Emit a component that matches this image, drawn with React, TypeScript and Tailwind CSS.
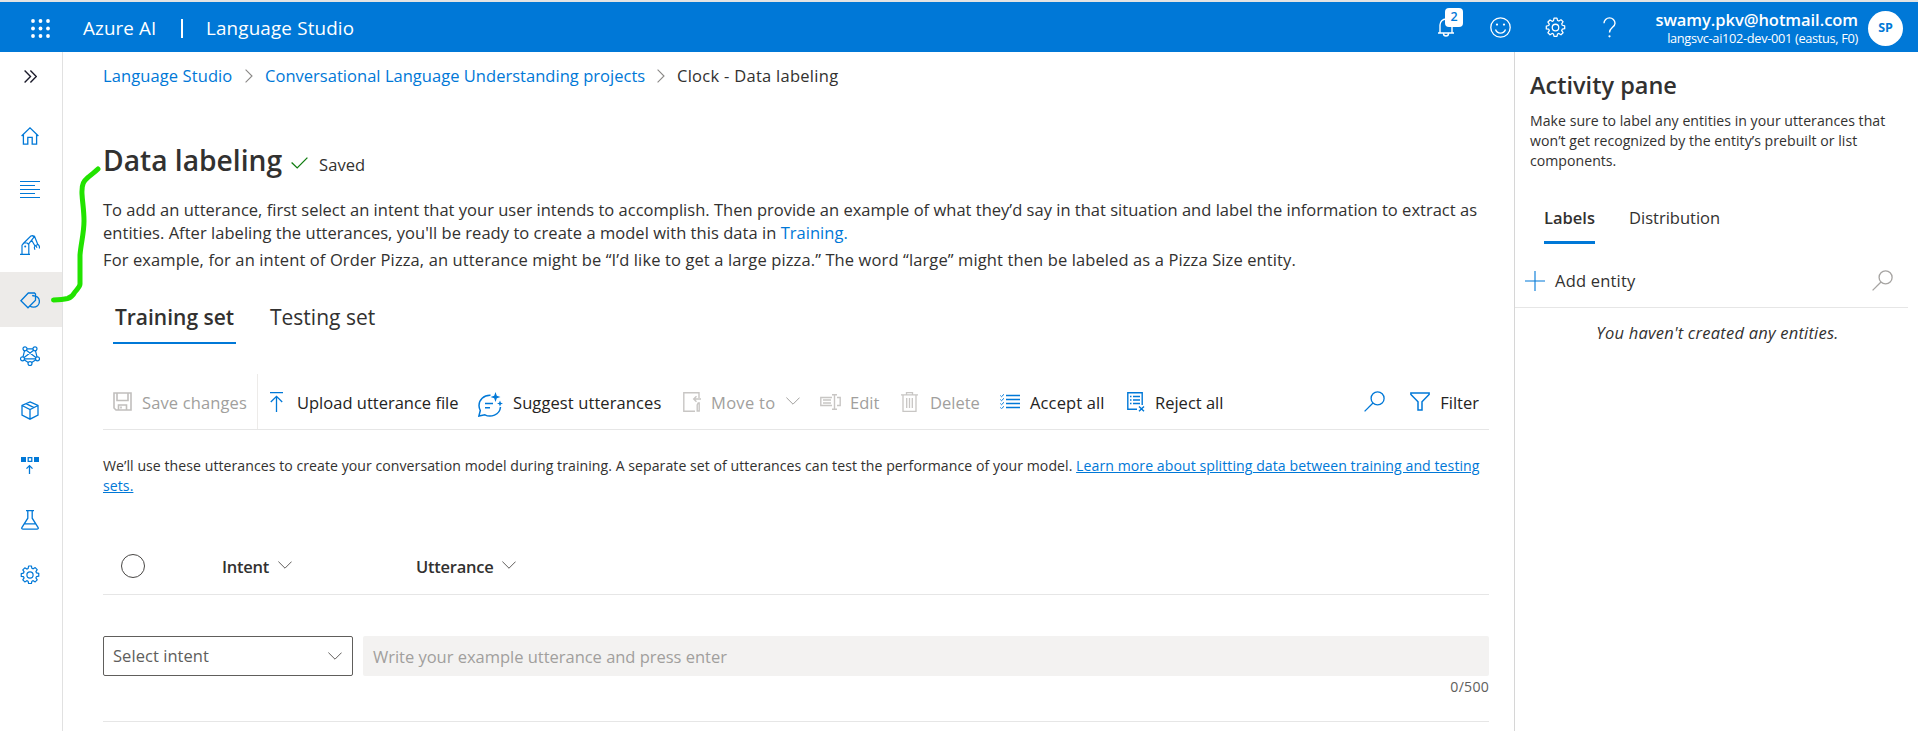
import React from 'react';

type IconProps = { className?: string; children?: React.ReactNode; box?: string; sw?: number };

function Icon({ className = '', children, box = '0 0 20 20', sw = 1.2 }: IconProps) {
  return (
    <svg viewBox={box} fill="none" stroke="currentColor" strokeWidth={sw} className={`shrink-0 ${className}`}>
      {children}
    </svg>
  );
}

const GEAR =
  'M8.6 1h2.8l.5 2.3 1.3.55 2-1.3 2 2-1.3 2 .55 1.3 2.3.5v2.8l-2.3.5-.55 1.3 1.3 2-2 2-2-1.3-1.3.55-.5 2.3H8.6l-.5-2.3-1.3-.55-2 1.3-2-2 1.3-2-.55-1.3L1.25 11.4V8.6l2.3-.5.55-1.3-1.3-2 2-2 2 1.3 1.3-.55z';

function Gear({ className }: { className?: string }) {
  return (
    <Icon className={className} sw={1.2}>
      <path d={GEAR} strokeLinejoin="round" />
      <circle cx="10" cy="10" r="3.1" />
    </Icon>
  );
}

function ChevronDown({ className = '' }: { className?: string }) {
  return (
    <Icon box="0 0 14 8" className={`h-2 w-[14px] ${className}`} sw={1}>
      <path d="M.4.6 7 7.2 13.6.6" />
    </Icon>
  );
}

function ChevronRight({ className = '' }: { className?: string }) {
  return (
    <Icon box="0 0 8 14" className={`h-[14px] w-2 text-[#8a8886] ${className}`} sw={1.1}>
      <path d="M.6.6 7 7 .6 13.4" />
    </Icon>
  );
}

function Search({ className = '' }: { className?: string }) {
  return (
    <Icon box="0 0 21 21" className={`size-[21px] ${className}`} sw={1.3}>
      <circle cx="13.6" cy="7.4" r="6.5" />
      <path d="M9 12 .6 20.4" />
    </Icon>
  );
}

function NavItem({ active = false, children }: { active?: boolean; children: React.ReactNode }) {
  return (
    <a className={`flex h-[55px] items-center justify-center pr-[2px] pt-[1px] ${active ? 'bg-[#edebe9]' : ''}`}>{children}</a>
  );
}

function Header() {
  const dots = [2, 9.5, 17];
  return (
    <header className="flex h-[52px] shrink-0 items-center border-t-2 border-[#e3e3e3] bg-[#0078d7] text-white">
      <svg viewBox="0 0 19 19" className="ml-[31px] mt-[3px] size-[19px] shrink-0" fill="currentColor">
        {dots.map((x) => dots.map((y) => <circle key={`${x}-${y}`} cx={x} cy={y} r="1.9" />))}
      </svg>
      <span className="ml-[33px] mt-[2px] w-[98px] whitespace-nowrap text-[18.8px] tracking-[0.12px]">Azure AI</span>
      <span className="mt-[3px] h-[19px] w-[2px] bg-white" />
      <span className="ml-[23px] mt-[2px] whitespace-nowrap text-[18.8px] tracking-[0.18px]">Language Studio</span>

      <div className="relative ml-auto h-[50px] w-[53px]">
        <Icon box="0 0 18 20" className="mt-[15px] h-5 w-[18px]" sw={1.4}>
          <path d="M1 16h16M3 16V8a6 6 0 0 1 12 0v8M6.5 16.5a2.5 2.5 0 0 0 5 0" />
        </Icon>
        <span className="absolute left-[8px] top-[6px] flex h-[19px] w-[18px] items-center justify-center rounded-[4px] bg-white text-[12.5px] font-semibold text-[#0078d7]">
          2
        </span>
      </div>
      <Icon box="0 0 21 21" className="size-[21px]" sw={1.3}>
        <circle cx="10.5" cy="10.5" r="9.7" />
        <path d="M5.5 12.5a5.3 5.3 0 0 0 10 0" />
        <circle cx="7" cy="7.6" r="1.1" fill="currentColor" stroke="none" />
        <circle cx="14" cy="7.6" r="1.1" fill="currentColor" stroke="none" />
      </Icon>
      <Gear className="ml-[34px] size-[21px]" />
      <Icon box="0 0 13 21" className="ml-[37px] h-[21px] w-[13px]" sw={1.4}>
        <path d="M1 6.2a5.5 5.3 0 0 1 11 0c0 4-5.5 4.300-5.500 9.300" />
        <circle cx="6.500" cy="19.300" r="1.100" fill="currentColor" stroke="none" />
      </Icon>
      <div className="ml-[39px] mt-[3px] flex w-[203px] flex-col items-end whitespace-nowrap">
        <span className="text-[16.500px] font-semibold leading-[20px] tracking-[-0.05px]">swamy.pkv@hotmail.com</span>
        <span className="text-[12.800px] leading-[17px] tracking-[-0.330px]">langsvc-ai102-dev-001 (eastus, F0)</span>
      </div>
      <span className="ml-[10px] mr-[15px] mt-[2px] flex size-[35px] items-center justify-center rounded-full bg-white text-[12.500px] font-bold text-[#0078d7]">
        SP
      </span>
    </header>
  );
}

function SideNav() {
  return (
    <nav className="w-[63px] shrink-0 border-r border-[#e1e1e1] text-[#0078d7]">
      <div className="flex h-[55px] items-start justify-center pr-[1px] pt-[18px]">
        <Icon box="0 0 13 13" className="size-[13px] text-[#1b1b2b]" sw={1.4}>
          <path d="m.6.6 5.900 5.900-5.900 5.900M6.400.6l5.900 5.900-5.900 5.900" />
        </Icon>
      </div>
      <NavItem>
        <Icon box="0 0 18 18" className="mt-[1px] size-[18px]" sw={1.300}>
          <path d="M.6 9 9 .9 17.400 9M2.400 7.500v9.700h4.400v-6.800h4.400v6.800h4.400V7.500" />
        </Icon>
      </NavItem>
      <NavItem>
        <Icon className="size-5" sw={1}>
          <path d="M0 1.500h20M0 5.500h15M0 9.500h20M0 13.500h15M0 17.500h20" />
        </Icon>
      </NavItem>
      <NavItem>
        <Icon className="size-5" sw={1.200}>
          <path d="M0 19.300h10M2 19V10.200l2-2.200h3.200l1.600 1.500V19M2.800 9 10.800 1l1.700-.4 1.500 1.500-5.500 7M13 .8l1.500.4 3.300 8.300M11.500 5l3.500 6M18 9.500l-2 .8c-1.800.8-2 2.800-1 4.400M18 9.500c1.300.8 1.700 2.200 1.400 4M15.800 10.500l1.200 2.200" />
          <circle cx="5.200" cy="11.500" r="1" fill="currentColor" stroke="none" />
        </Icon>
      </NavItem>
      <NavItem active>
        <Icon box="0 0 20 17" className="mt-[1px] h-[17px] w-5" sw={1.300}>
          <path d="M.9 8.800 8.300 1h6.200l1 1v6.300L8 15.800z" />
          <path d="M12.500 3.600c5 .2 6.900 3 6.900 5.900 0 3.500-2.900 5.700-6 5.700-1.500 0-2.600-.5-3.600-1.300" />
          <circle cx="13" cy="3.600" r=".8" fill="currentColor" stroke="none" />
        </Icon>
      </NavItem>
      <NavItem>
        <Icon className="mt-[1px] size-5" sw={1.200}>
          <circle cx="5" cy="2.800" r="2" />
          <circle cx="15" cy="2.800" r="2" />
          <circle cx="2.500" cy="12.800" r="2" />
          <circle cx="17.500" cy="12.800" r="2" />
          <circle cx="10" cy="17.600" r="2" />
          <path d="M7 2.800h6M4.500 4.800 3 10.800M15.500 4.800l1.500 6M4.500 12.800h11M4.400 14l3.900 2.500M15.600 14l-3.900 2.500M6.300 4.300l9.600 7.200M13.700 4.300 4.100 11.500" />
        </Icon>
      </NavItem>
      <NavItem>
        <Icon box="0 0 18 19" className="mr-[1px] h-[19px] w-[18px]" sw={1.300}>
          <path d="M9 .9 17 4.500v9.700l-8 4-8-4V4.500zM1 4.500l8 4 8-4M9 8.500v9.700M5 2.700l8 4" />
        </Icon>
      </NavItem>
      <NavItem>
        <Icon box="0 0 18 17" className="h-[17px] w-[18px]" sw={1.300}>
          <path d="M0 0h5v5H0zM13 0h5v5h-5z" fill="currentColor" stroke="none" />
          <path d="M7.200.7h3.600v3.600H7.200zM8.500 17V8.800M5.500 11.600l3-3 3 3" />
        </Icon>
      </NavItem>
      <NavItem>
        <Icon box="0 0 18 20" className="h-5 w-[18px]" sw={1.300}>
          <path d="M5 .7h8M6.800.7v7.500L1 17.300c-.6 1.200 0 1.900 1 1.900h14c1 0 1.600-.7 1-1.900L11.200 8.200V.7M3.500 13.800h11" />
        </Icon>
      </NavItem>
      <NavItem>
        <Gear className="size-5" />
      </NavItem>
    </nav>
  );
}

function Toolbar() {
  return (
    <div className="mt-[30px] flex h-[56px] items-center whitespace-nowrap border-b border-[#e6e6e6] text-[16.500px] text-[#242322]">
      <div className="flex h-full w-[155px] shrink-0 items-center border-r border-[#edebe9] pl-[10px] text-[#a19f9d]">
        <Icon box="0 0 19 19" className="size-[19px] text-[#c1bfbd]" sw={1.600}>
          <path d="M1 1h17v17H3l-2-2zM4 1v7.500h11V1M5.500 18v-5h8v5M8 14.500v2" />
        </Icon>
        <span className="ml-[10px] mt-[3px] tracking-[0.130px]">Save changes</span>
      </div>
      <div className="flex w-[220px] shrink-0 items-center pl-[12px]">
        <Icon box="0 0 13 20" className="h-5 w-[13px] text-[#0078d7]" sw={1.300}>
          <path d="M0 .7h13M6.500 20V4.500M.8 10l5.700-5.700 5.700 5.700" />
        </Icon>
        <span className="ml-[14px] mt-[3px]">Upload utterance file</span>
      </div>
      <div className="flex w-[205px] shrink-0 items-center">
        <Icon box="0 0 25 25" className="mt-[5px] size-[25px] text-[#0078d7]" sw={1.500}>
          <path d="M12.500 3.200C5.500 3 1 8 1 13.500c0 2 .5 3.500 1.300 5L.9 24l6-1.200c5.500 3 14.800.500 15.600-7.800M7 11.500h8M7 15.800h5" />
          <path
            d="m17.500 0 1.300 3.700 3.700 1.300-3.700 1.300L17.500 10l-1.300-3.700L12.500 5l3.700-1.300zM22 8.500l.9 2.200 2.100.8-2.100.8L22 14.500l-.9-2.200-2.100-.8 2.100-.8z"
            fill="currentColor"
            stroke="none"
          />
        </Icon>
        <span className="ml-[10px] mt-[3px] tracking-[0.100px]">Suggest utterances</span>
      </div>
      <div className="flex w-[137px] shrink-0 items-center text-[#a19f9d]">
        <Icon box="0 0 18 20" className="h-5 w-[18px] text-[#c8c6c4]" sw={1.400}>
          <path d="M16 6V.8H.8v18.400H12M18 7h-7M13.500 4.200 10.700 7l2.800 2.800M14.200 19v-6l1-2h1v8z" />
        </Icon>
        <span className="ml-[10px] mt-[3px] w-[65px] tracking-[0.300px]">Move to</span>
        <ChevronDown className="ml-[10px] mt-[-1px]" />
      </div>
      <div className="flex w-[81px] shrink-0 items-center text-[#a19f9d]">
        <Icon box="0 0 21 16" className="h-4 w-[21px] text-[#c8c6c4]" sw={1.400}>
          <path d="M12 3.500H.8v8H12M3 6h8M3 9h8M17 3.500h3.200v8H17M14.500.8v14.400M12 .7h5M12 15.300h5" />
        </Icon>
        <span className="ml-[9px] mt-[3px]">Edit</span>
      </div>
      <div className="flex w-[99px] shrink-0 items-center text-[#a19f9d]">
        <Icon box="0 0 17 20" className="h-5 w-[17px] text-[#c8c6c4]" sw={1.300}>
          <path d="M0 2.800h17M5.500 2.500V.7h6v1.800M2 3v16.300h13V3M5.700 6v10M8.500 6v10M11.300 6v10" />
        </Icon>
        <span className="ml-[12px] mt-[3px]">Delete</span>
      </div>
      <div className="flex w-[127px] shrink-0 items-center">
        <Icon box="0 0 20 15" className="h-[15px] w-5 text-[#0078d7]" sw={1.400}>
          <path d="M6 1.500h14M6 5.500h14M6 9.500h14M6 13.500h14" />
          <path d="m.3 1.500 1.200 1.200L4 .3M.3 5.500l1.200 1.200L4 4.300M.3 9.500l1.200 1.200L4 8.300M.3 13.500l1.200 1.200L4 12.300" strokeWidth="1" />
        </Icon>
        <span className="ml-[10px] mt-[3px] tracking-[0.130px]">Accept all</span>
      </div>
      <div className="flex shrink-0 items-center">
        <Icon box="0 0 18 20" className="h-5 w-[18px] text-[#0078d7]" sw={1.400}>
          <path d="M10 17.300H.8V.8h14.400V13M6 4.500h7M6 8h7M6 11.500h7M3 4.500h1.500M3 8h1.500M3 11.500h1.500M12 14.500l5 4.800M17 14.500l-5 4.800" />
        </Icon>
        <span className="ml-[10px] mt-[3px]">Reject all</span>
      </div>
      <div className="ml-auto mr-[10px] flex items-center">
        <Search className="text-[#0078d7]" />
        <Icon box="0 0 20 19" className="ml-[25px] h-[19px] w-5 text-[#0078d7]" sw={1.500}>
          <path d="M.9.900h18.200v1.500L12 9.700V18H8V9.700L.9 2.400z" />
        </Icon>
        <span className="ml-[10px] mt-[3px]">Filter</span>
      </div>
    </div>
  );
}

function Main() {
  return (
    <main className="flex w-[1451px] shrink-0 flex-col pl-[40px] pr-[25px] text-[#323130]">
      <div className="mt-[12px] flex h-6 items-center whitespace-nowrap text-[16.500px]">
        <span className="w-[138px] tracking-[0.100px] text-[#0078d7]">Language Studio</span>
        <ChevronRight className="ml-[4px]" />
        <span className="ml-[12px] w-[388px] tracking-[0.030px] text-[#0078d7]">Conversational Language Understanding projects</span>
        <ChevronRight className="ml-[4px]" />
        <span className="ml-[12px] mt-[1px] tracking-[0.280px]">Clock - Data labeling</span>
      </div>

      <div className="mt-[52px] flex h-10 items-center whitespace-nowrap">
        <h1 className="w-[188px] text-[28.200px] font-semibold">Data labeling</h1>
        <Icon box="0 0 17 12" className="mt-[5px] h-3 w-[17px] text-[#107c10]" sw={1.300}>
          <path d="m.6 5.500 5.600 5.400L16.400.6" />
        </Icon>
        <span className="ml-[11px] mt-[10px] text-[16.500px] tracking-[0.100px]">Saved</span>
      </div>

      <div className="mt-[18px] whitespace-nowrap text-[16.500px] leading-[23px]">
        <p className="tracking-[0.013px]">
          To add an utterance, first select an intent that your user intends to accomplish. Then provide an example of what they’d say in that
          situation and label the information to extract as
          <br />
          <span className="tracking-[0.040px]">
            entities. After labeling the utterances, you'll be ready to create a model with this data in{' '}
            <a className="text-[#0078d7]">Training.</a>
          </span>
        </p>
        <p className="mt-[4px] tracking-[0.115px]">
          For example, for an intent of Order Pizza, an utterance might be “I’d like to get a large pizza.” The word “large” might then be
          labeled as a Pizza Size entity.
        </p>
      </div>

      <div className="mt-[25px] flex h-[48px] whitespace-nowrap pl-[10px] text-[21px]">
        <div className="flex h-[48px] w-[123px] items-center justify-center border-b-2 border-[#0078d7] pb-[3px] font-semibold">Training set</div>
        <div className="flex h-[46px] items-center pb-[3px] pl-[34px]">Testing set</div>
      </div>

      <Toolbar />

      <p className="mt-[26px] whitespace-nowrap text-[14.100px] leading-[20px] tracking-[0.050px]">
        We’ll use these utterances to create your conversation model during training. A separate set of utterances can test the performance of
        your model.{' '}
        <a className="tracking-[0.065px] text-[#0078d7] underline">
          Learn more about splitting data between training and testing
          <br />
          sets.
        </a>
      </p>

      <div className="mt-[39px] flex h-[60px] items-center whitespace-nowrap border-b border-[#e6e6e6] text-[16.500px] font-semibold">
        <span className="ml-[18px] mt-[2px] size-[24px] rounded-full border border-[#484644]" />
        <span className="ml-[77px] mt-[5px] w-[48px] tracking-[-0.250px]">Intent</span>
        <ChevronDown className="ml-[8px] mt-[1px] text-[#605e5c]" />
        <span className="ml-[124px] mt-[5px] w-[78px] tracking-[-0.250px]">Utterance</span>
        <ChevronDown className="ml-[8px] mt-[1px] text-[#605e5c]" />
      </div>

      <div className="mt-[41px] flex gap-[10px] whitespace-nowrap text-[16.500px]">
        <div className="flex h-[40px] w-[250px] items-center justify-between rounded-[2px] border border-[#605e5c] pl-[9px] pr-[10px] text-[#605e5c]">
          <span className="mt-[1px] tracking-[0.050px]">Select intent</span>
          <ChevronDown />
        </div>
        <div className="flex h-[40px] flex-1 items-center rounded-[2px] bg-[#f3f2f1] pl-[10px] pt-[3px] tracking-[-0.020px] text-[#a19f9d]">
          Write your example utterance and press enter
        </div>
      </div>
      <div className="flex h-[46px] justify-end border-b border-[#e6e6e6] pt-[1px] text-[14.100px] leading-[20px] tracking-[0.250px] text-[#605e5c]">
        0/500
      </div>
    </main>
  );
}

function ActivityPane() {
  return (
    <aside className="flex-1 border-l border-[#d6d6d6] text-[#323130]">
      <h2 className="pl-[15px] pt-[15px] text-[23.500px] font-semibold leading-[36px]">Activity pane</h2>
      <p className="mt-[8px] whitespace-nowrap pl-[15px] text-[14.100px] leading-[20px] tracking-[0.030px]">
        Make sure to label any entities in your utterances that
        <br />
        won’t get recognized by the entity’s prebuilt or list
        <br />
        components.
      </p>
      <div className="mt-[18px] flex h-[55px] whitespace-nowrap pl-[29px] text-[16.500px]">
        <div className="flex w-[51px] items-center justify-center border-b-3 border-[#0078d7] pt-[7px] font-semibold">Labels</div>
        <div className="flex items-center pb-[3px] pl-[34px] pt-[7px]">Distribution</div>
      </div>
      <div className="mr-[10px] flex h-[64px] items-center border-b border-[#e6e6e6] pl-[10px] pr-[15px] pt-[11px] text-[16.500px]">
        <Icon className="mb-[1px] size-5 text-[#0078d7]" sw={1.100}>
          <path d="M10 0v20M0 10h20" />
        </Icon>
        <span className="mb-[-1px] ml-[10px] whitespace-nowrap tracking-[0.200px]">Add entity</span>
        <Search className="mb-[1px] ml-auto text-[#a6a4a2]" />
      </div>
      <p className="pl-[2px] pt-[13px] text-center text-[16.500px] italic leading-[24px] tracking-[0.220px]">You haven't created any entities.</p>
    </aside>
  );
}

export default function App() {
  return (
    <div className="relative flex h-[731px] w-[1918px] flex-col overflow-hidden bg-white font-['Open_Sans','Noto_Sans',sans-serif]">
      <Header />
      <div className="flex min-h-0 flex-1">
        <SideNav />
        <Main />
        <ActivityPane />
      </div>
      <svg viewBox="0 0 60 145" className="pointer-events-none absolute left-[48px] top-[160px] h-[145px] w-[60px]" fill="none">
        <path
          d="M5.500 140c6-.2 9-.3 14-1.500 5-1.500 6-4 7-6 4-5 5.500-6 5.500-8.500V95c1-12 4-22 4-34 0-11-1.500-18-2-27-.5-11 2-13 6.500-17 4-3.500 6.500-5 9.500-8"
          stroke="#22e300"
          strokeWidth="5"
          strokeLinecap="round"
          strokeLinejoin="round"
        />
      </svg>
    </div>
  );
}
